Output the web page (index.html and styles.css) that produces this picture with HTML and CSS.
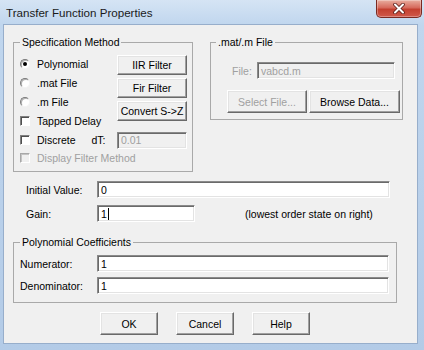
FILE: index.html
```html
<!DOCTYPE html>
<html lang="en">
<head>
    <meta charset="UTF-8">
    <title>Transfer Function Properties</title>
    <link rel="stylesheet" href="styles.css">
</head>
<body>

<div class="window">
    <!-- barra de titulo -->
    <div class="titlebar">
        <span class="title">Transfer Function Properties</span>
        <div class="close">
            <svg width="14" height="11" viewBox="0 0 14 11">
                <path d="M3 1.5 L11 9.5 M11 1.5 L3 9.5" stroke="#5a1d18" stroke-width="3.6" stroke-linecap="round"/>
                <path d="M3 1.5 L11 9.5 M11 1.5 L3 9.5" stroke="#ffffff" stroke-width="2" stroke-linecap="round"/>
            </svg>
        </div>
    </div>

    <div class="client">
        <div class="top">
            <fieldset class="group spec">
                <legend>Specification Method</legend>
                <div class="spec-main">
                    <div class="choices">
                        <div class="opt"><span class="radio on"></span>Polynomial</div>
                        <div class="opt"><span class="radio"></span>.mat File</div>
                        <div class="opt"><span class="radio"></span>.m File</div>
                        <div class="opt"><span class="check"></span>Tapped Delay</div>
                    </div>
                    <div class="spec-buttons">
                        <div class="btn">IIR Filter</div>
                        <div class="btn">Fir Filter</div>
                        <div class="btn">Convert S-&gt;Z</div>
                    </div>
                </div>
                <div class="opt discrete-row">
                    <span class="check"></span>
                    <span>Discrete</span>
                    <span class="dt">dT:</span>
                    <div class="field disabled dt-field">0.01</div>
                </div>
                <div class="opt short disabled"><span class="check"></span>Display Filter Method</div>
            </fieldset>

            <fieldset class="group matfile">
                <legend>.mat/.m File</legend>
                <div class="file-row">
                    <span class="file-label disabled">File:</span>
                    <div class="field disabled file-field">vabcd.m</div>
                </div>
                <div class="mat-buttons">
                    <div class="btn disabled select-btn">Select File...</div>
                    <div class="btn browse-btn">Browse Data...</div>
                </div>
            </fieldset>
        </div>

        <div class="field-row initial">
            <span class="label">Initial Value:</span>
            <div class="field wide">0</div>
        </div>
        <div class="field-row gain">
            <span class="label">Gain:</span>
            <div class="field narrow">1<span class="caret"></span></div>
            <span class="note">(lowest order state on right)</span>
        </div>

        <fieldset class="group poly">
            <legend>Polynomial Coefficients</legend>
            <div class="coef-row">
                <span class="coef-label">Numerator:</span>
                <div class="field coef">1</div>
            </div>
            <div class="coef-row second">
                <span class="coef-label">Denominator:</span>
                <div class="field coef">1</div>
            </div>
        </fieldset>

        <div class="actions">
            <div class="btn">OK</div>
            <div class="btn">Cancel</div>
            <div class="btn">Help</div>
        </div>
    </div>
</div>

</body>
</html>
```

FILE: styles.css
```css
* {
    box-sizing: border-box;
}
body {
    margin: 0;
    background: #b9d1ea;
    font-family: "Liberation Sans", Arial, sans-serif;
    font-size: 10.5px;
    color: #000;
}
.window {
    width: 424px;
    height: 350px;
    background: linear-gradient(#d5e4f4, #c0d6ee 25px, #b3cbe7);
    overflow: hidden;
}
.titlebar {
    height: 25px;
    display: flex;
    justify-content: space-between;
    align-items: flex-start;
}
.title {
    font-size: 11.6px;
    line-height: 14px;
    color: #1a1a1a;
    margin: 6px 0 0 6px;
}
.close {
    width: 46px;
    height: 18px;
    margin-right: 2px;
    border: 1px solid #7a2a22;
    border-top: 0;
    border-radius: 0 0 5px 5px;
    background: linear-gradient(#e9ae9f, #d66a5c 45%, #c3402f 55%, #d0594b);
    box-shadow: inset 0 0 0 1px rgba(255, 255, 255, 0.3);
    display: flex;
    align-items: center;
    justify-content: center;
}
.client {
    margin: 0 7px 0 4px;
    height: 318px;
    background: #f0f0f0;
    box-shadow: 0 0 0 1px #97aecb;
    padding: 11px 0 0 9px;
}

/* caixas de grupo */
.group {
    margin: 0;
    min-width: 0;
    border: 1px solid #a9a9a9;
}
.group legend {
    padding: 0 2px;
    line-height: 12px;
    font-size: 10.5px;
}
.top {
    display: flex;
    align-items: flex-start;
    gap: 17px;
}
.spec {
    width: 180px;
    padding: 6px 5px 4px 6px;
}
.spec-main {
    display: flex;
}
.choices {
    flex: 1;
}
.opt {
    display: flex;
    align-items: center;
    height: 19px;
    white-space: nowrap;
}
.opt.short, .discrete-row {
    height: 18px;
}
.discrete-row {
    margin-top: 1px;
}
.dt {
    margin-left: 16px;
}
.dt-field {
    margin-left: auto;
    width: 70px;
    height: 16px;
}
.spec-buttons {
    width: 70px;
    margin-top: 1px;
    display: flex;
    flex-direction: column;
    gap: 3px;
}

/* radio e checkbox classicos */
.radio {
    width: 10px;
    height: 10px;
    margin-right: 7px;
    border-radius: 50%;
    background: #fff;
    border: 1px solid;
    border-color: #7a7a7a #f4f4f4 #f4f4f4 #7a7a7a;
    box-shadow: inset 1px 1px #b0b0b0;
    display: flex;
    align-items: center;
    justify-content: center;
}
.radio.on::after {
    content: "";
    width: 4px;
    height: 4px;
    border-radius: 50%;
    background: #000;
}
.check {
    width: 10px;
    height: 10px;
    margin-right: 7px;
    background: #fff;
    border: 1px solid;
    border-color: #808080 #fff #fff #808080;
    box-shadow: inset 1px 1px #505050;
}
.disabled {
    color: #a0a0a0;
}
.disabled .check {
    background: #f0f0f0;
    border-color: #a8a8a8 #fff #fff #a8a8a8;
    box-shadow: inset 1px 1px #c4c4c4;
}

/* botoes e campos */
.btn {
    height: 20px;
    display: flex;
    align-items: center;
    justify-content: center;
    background: #f0f0f0;
    border: 1px solid;
    border-color: #fff #696969 #696969 #fff;
    box-shadow: inset -1px -1px #a0a0a0, inset 1px 1px #e3e3e3;
    white-space: nowrap;
}
.btn.disabled {
    color: #a0a0a0;
}
.field {
    height: 17px;
    background: #fff;
    border: 1px solid;
    border-color: #8a8a8a #fff #fff #8a8a8a;
    box-shadow: inset 1px 1px #6a6a6a, inset -1px -1px #e3e3e3;
    padding-left: 3px;
    display: flex;
    align-items: center;
}
.field.disabled {
    background: #f0f0f0;
}
.caret {
    width: 1px;
    height: 12px;
    background: #000;
    margin-left: 1px;
}

.matfile {
    width: 193px;
    padding: 14px 2px 6px 5px;
}
.file-row {
    display: flex;
    align-items: center;
    height: 17px;
    margin-right: 5px;
}
.file-label {
    margin-left: 16px;
}
.file-field {
    margin-left: auto;
    width: 138px;
}
.mat-buttons {
    display: flex;
    gap: 2px;
    margin-top: 11px;
}
.mat-buttons .btn {
    height: 23px;
}
.select-btn {
    width: 80px;
    margin-left: 11px;
}
.browse-btn {
    width: 91px;
}

.field-row {
    display: flex;
    align-items: center;
    margin-left: 13px;
}
.field-row .label {
    width: 71px;
}
.initial {
    margin-top: 9px;
}
.gain {
    margin-top: 7px;
}
.wide {
    width: 293px;
}
.narrow {
    width: 98px;
}
.note {
    margin-left: 50px;
}

.poly {
    width: 384px;
    margin-top: 14px;
    padding: 7px 7px 8px 6px;
}
.coef-row {
    display: flex;
    align-items: center;
}
.coef-row.second {
    margin-top: 5px;
}
.coef-label {
    width: 77px;
}
.coef {
    width: 292px;
}

.actions {
    display: flex;
    gap: 18px;
    margin: 9px 0 0 87px;
}
.actions .btn {
    width: 58px;
    height: 23px;
}
```
